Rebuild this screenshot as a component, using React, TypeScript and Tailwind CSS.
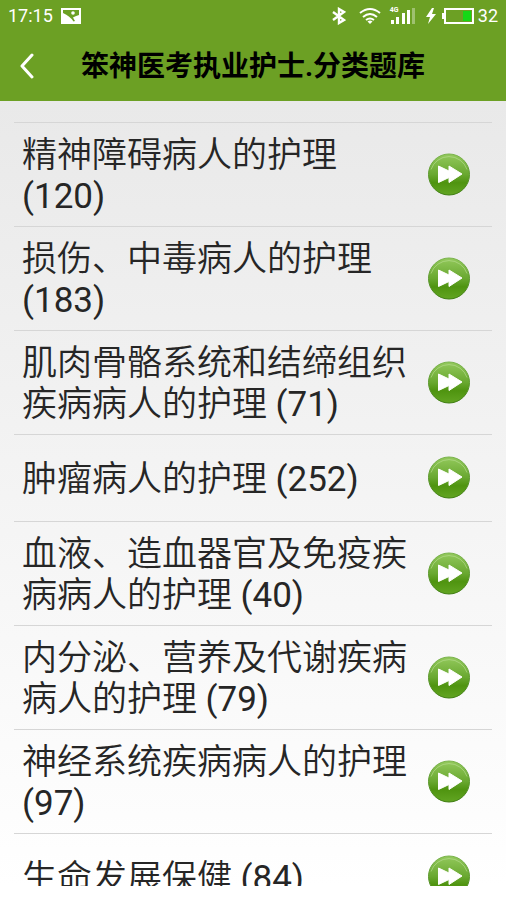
const categories = [
  { name: "精神障碍病人的护理", count: 120 },
  { name: "损伤、中毒病人的护理", count: 183 },
  { name: "肌肉骨骼系统和结缔组织疾病病人的护理", count: 71 },
  { name: "肿瘤病人的护理", count: 252 },
  { name: "血液、造血器官及免疫疾病病人的护理", count: 40 },
  { name: "内分泌、营养及代谢疾病病人的护理", count: 79 },
  { name: "神经系统疾病病人的护理", count: 97 },
  { name: "生命发展保健", count: 84 },
];

function StatusBar() {
  return (
    <div className="flex h-8 items-center justify-between pl-2 pr-2 text-white">
      <div className="flex items-center gap-2">
        <span className="text-[18px] leading-8">17:15</span>
        <svg width="20" height="16" viewBox="0 0 20 16" aria-hidden="true">
          <path d="M0 0h20v16H0z" fill="#fff" />
          <path d="M2 2 H18 V7 Q14 8 12 9.500 L14 13 L12.500 13.500 Q9 8 2 5z" fill="#6ca024" />
          <circle cx="12" cy="5" r="1.800" fill="#fff" />
        </svg>
      </div>
      <div className="flex items-center">
        <svg width="14" height="18" viewBox="0 0 14 18" fill="none" stroke="#fff" strokeWidth="2.400" aria-hidden="true">
          <path d="M1 5 L12 13 L7 16 V2 L12 5 L1 13" />
        </svg>
        <svg className="ml-3" width="24" height="18" viewBox="0 0 24 18" fill="none" stroke="#fff" strokeWidth="2" aria-hidden="true">
          <path d="M2 6 Q12 -2 22 6" />
          <path d="M5 10 Q12 4 19 10" />
          <path d="M8 13 Q12 10 16 13" />
          <path d="M9.500 14.500 Q12 12.500 14.500 14.500 L12 17z" fill="#fff" stroke="none" />
        </svg>
        <span className="relative ml-2 block h-[18px] w-7">
          <span className="absolute left-0 top-0 text-[7px] font-bold leading-[7px]">4G</span>
          <svg width="28" height="18" viewBox="0 0 28 18" fill="#fff" aria-hidden="true">
            <path d="M1 13h3v4H1zM6 10h3v7H6zM12 6h3v11h-3zM17 3h3v14h-3z" />
            <path d="M22 1h3v16h-3z" opacity=".35" />
          </svg>
        </span>
        <svg className="ml-2" width="10" height="16" viewBox="0 0 10 16" fill="#fff" aria-hidden="true">
          <path d="M6 0 L0 9 H4 L2 16 L10 6 H6 L8 0z" />
        </svg>
        <svg className="ml-1.5" width="32" height="16" viewBox="0 0 32 16" aria-hidden="true">
          <path d="M0 5h2v6H0z" fill="#fff" />
          <path d="M3 1h28v14H3z" fill="none" stroke="#fff" strokeWidth="2" />
          <path d="M21 3h8v10h-8z" fill="#16d816" />
        </svg>
        <span className="ml-1 text-[18px] leading-8">32</span>
      </div>
    </div>
  );
}

function ForwardIcon() {
  return (
    <svg className="block shrink-0" width="44" height="44" viewBox="0 0 44 44" aria-hidden="true">
      <defs>
        <linearGradient id="ball" x1="0" y1="0" x2="0" y2="1">
          <stop offset="0" stopColor="#93c95c" />
          <stop offset=".5" stopColor="#69a830" />
          <stop offset=".7" stopColor="#4f9410" />
          <stop offset="1" stopColor="#62a522" />
        </linearGradient>
        <linearGradient id="rim" x1="0" y1="0" x2="0" y2="1">
          <stop offset="0" stopColor="#79b34a" />
          <stop offset="1" stopColor="#3f7d12" />
        </linearGradient>
      </defs>
      <circle cx="22" cy="21.500" r="20.500" fill="url(#ball)" stroke="url(#rim)" />
      <path d="M4 16.500 A19 19 0 0 1 40 16.500" fill="none" stroke="#c6e6a4" strokeOpacity=".5" />
      <path d="M11.500 13 L22 18 V13 L35 21 L22 29.500 V24.500 L11.500 29.500z" fill="#fff" stroke="#fff" strokeLinejoin="round" />
    </svg>
  );
}

export default function App() {
  return (
    <div className="flex h-screen flex-col bg-white pb-3.5 font-[Roboto,'Noto_Sans_CJK_SC',sans-serif]">
      <header className="shrink-0 bg-[#6ca024]">
        <StatusBar />
        <div className="flex h-[69px] items-center pl-4">
          <button type="button" aria-label="返回" className="flex h-12 w-[65px] items-center">
            <svg width="22" height="28" viewBox="0 0 22 28" fill="none" stroke="#fff" strokeWidth="3" strokeLinecap="round" strokeLinejoin="round" aria-hidden="true">
              <path d="M16 2 L6 13 L16 24" />
            </svg>
          </button>
          <h1 className="whitespace-nowrap text-[28px] font-bold leading-10 text-black">笨神医考执业护士.分类题库</h1>
        </div>
      </header>
      <main className="min-h-0 flex-1 overflow-hidden bg-linear-to-b from-[#e9e9e9] to-white px-3.5 pt-[21px]">
        <ul>
          {categories.map((item) => (
            <li key={item.name} className="border-t border-[#d6d6d6]">
              <button type="button" className="flex min-h-[86px] w-full items-center justify-between pl-2 pr-[21px] text-left">
                <span className="w-[390px] pb-[9px] pt-3 text-[35px] font-[350] leading-[41px] text-[#262626]">
                  {item.name} <span className="font-normal">{`(${item.count})`}</span>
                </span>
                <ForwardIcon />
              </button>
            </li>
          ))}
        </ul>
      </main>
    </div>
  );
}
